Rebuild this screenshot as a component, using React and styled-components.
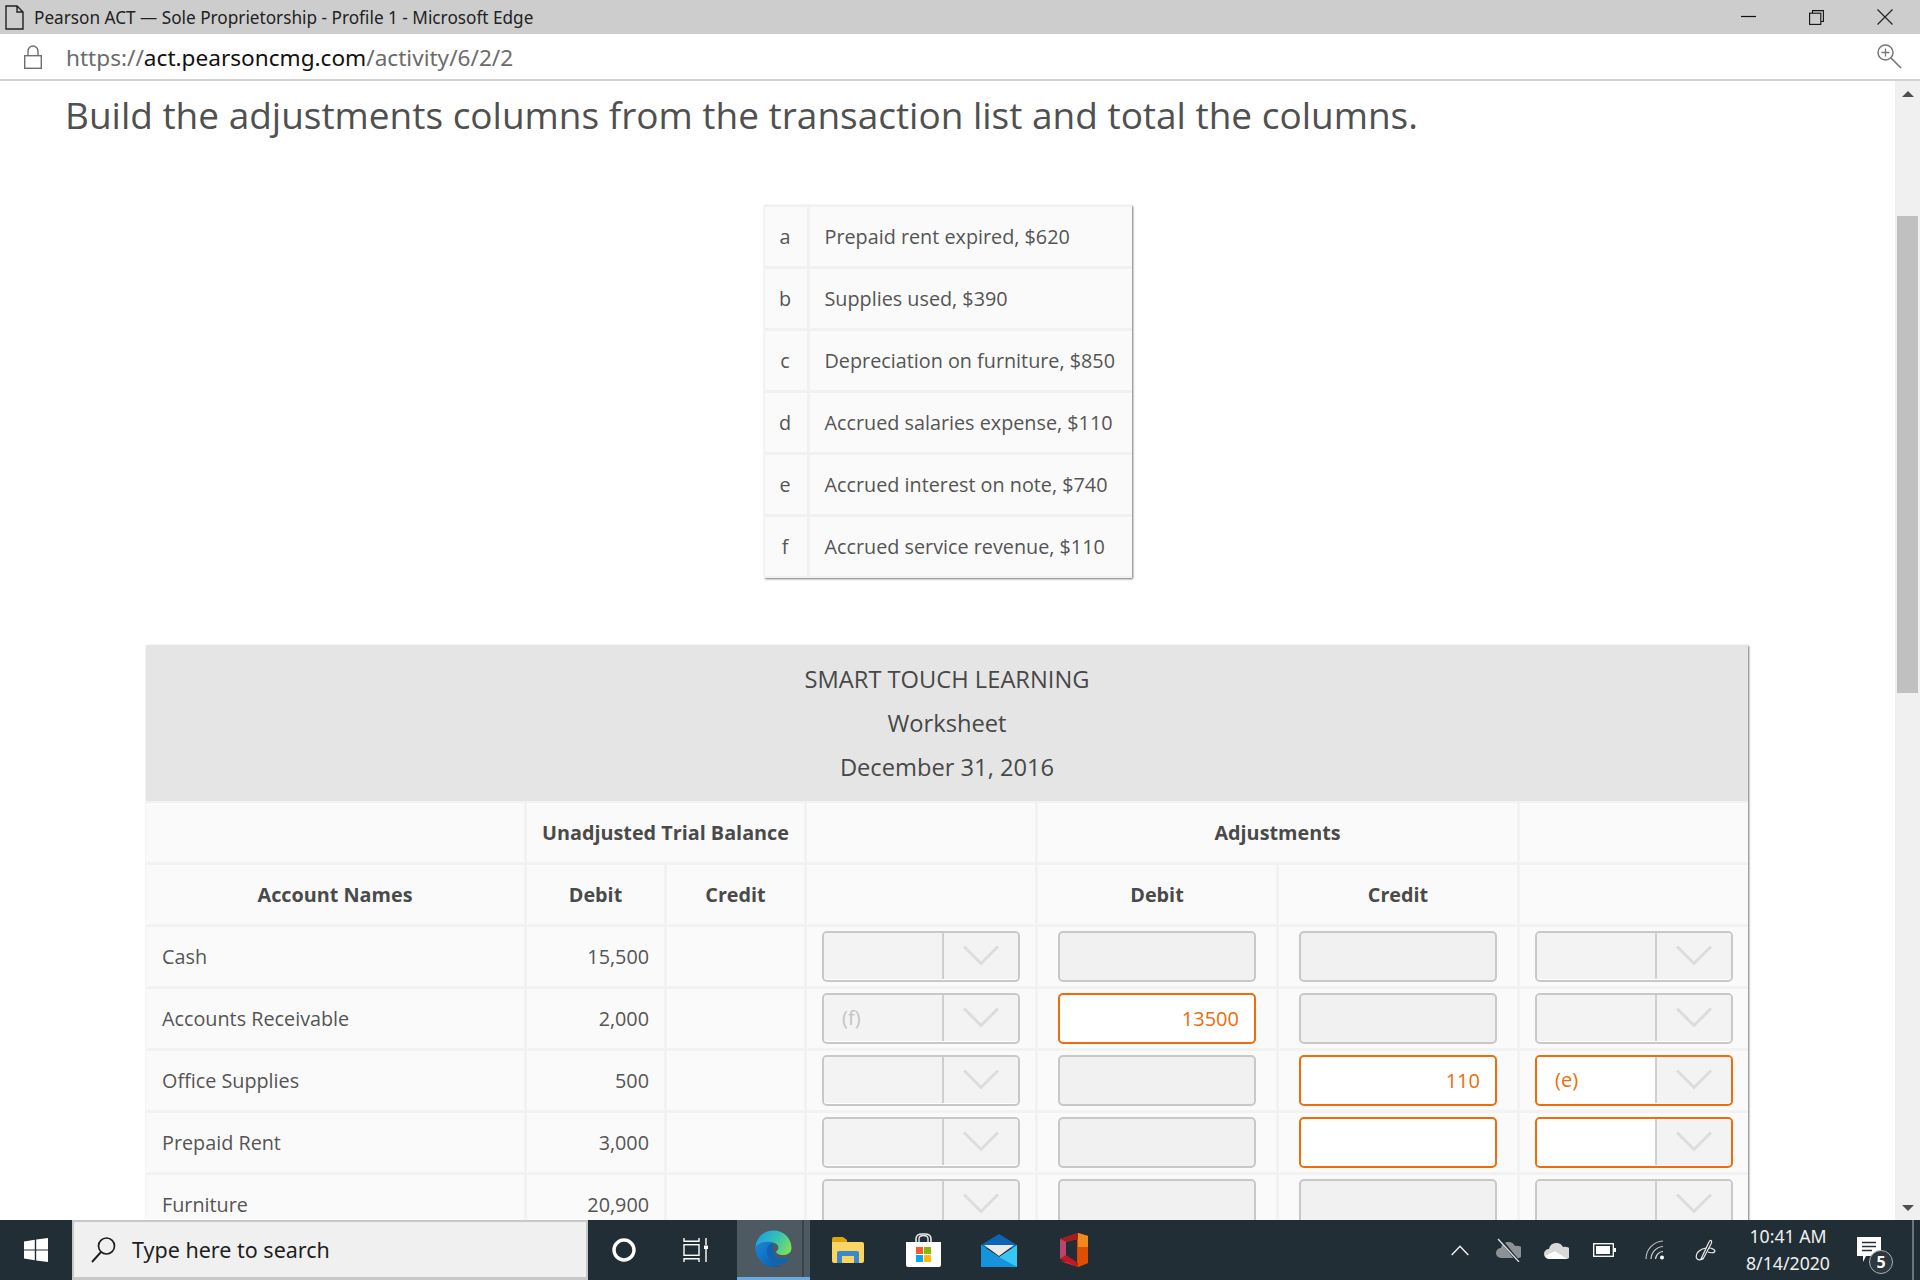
import { Fragment } from "react";
import styled, { createGlobalStyle } from "styled-components";

const GlobalStyle = createGlobalStyle`
  html, body {
    margin: 0;
    padding: 0;
    background: #fff;
  }
  * {
    box-sizing: border-box;
  }
`;

const Screen = styled.div`
  width: 1920px;
  height: 1280px;
  display: flex;
  flex-direction: column;
  overflow: hidden;
  font-family: "Open Sans", "Noto Sans", sans-serif;
`;

const TitleBar = styled.div`
  height: 34px;
  flex: none;
  display: flex;
  align-items: center;
  background: #cdcdcd;
  padding-left: 5px;
`;

const TitleText = styled.span`
  margin-left: 10px;
  font-family: "Noto Sans", sans-serif;
  font-size: 17.2px;
  color: #222;
`;

const WindowControls = styled.div`
  margin-left: auto;
  display: flex;
  align-items: center;
  padding-right: 27px;
  gap: 53px;
`;

const AddressBar = styled.div`
  height: 47px;
  flex: none;
  display: flex;
  align-items: center;
  background: #fff;
  border-bottom: 2px solid #d2d2d2;
  padding: 0 18px 0 24px;
`;

const Url = styled.div`
  margin-left: 24px;
  padding-top: 1px;
  font-family: "Noto Sans", sans-serif;
  font-size: 22.6px;
  color: #6b6b6b;
  strong {
    font-weight: 400;
    color: #111;
  }
`;

const ZoomIcon = styled.div`
  margin-left: auto;
  display: flex;
`;

const Main = styled.div`
  flex: 1;
  min-height: 0;
  display: flex;
  overflow: hidden;
`;

const Content = styled.div`
  flex: 1;
  min-width: 0;
  overflow: hidden;
  background: #fff;
`;

const Heading = styled.h1`
  margin: 12px 0 68px 65px;
  font-size: 36.97px;
  line-height: 44px;
  font-weight: 400;
  color: #505050;
  white-space: nowrap;
`;

const TransactionList = styled.div`
  width: 368px;
  margin-left: 764px;
  padding: 2px 0 2px 1px;
  display: grid;
  grid-template-columns: 42px 322px;
  grid-auto-rows: 59px;
  gap: 3px;
  background: #f1f1f1;
  box-shadow: 1px 1px 2px rgba(0, 0, 0, 0.55);
`;

const TransactionCell = styled.div`
  display: flex;
  align-items: center;
  justify-content: ${(p) => (p.$letter ? "center" : "flex-start")};
  padding: ${(p) => (p.$letter ? "0 2px 0 0" : "0 0 0 14.5px")};
  background: #fafafa;
  font-size: 19.8px;
  color: #555;
`;

const Worksheet = styled.div`
  width: 1602px;
  margin: 67px 0 0 146px;
  background: #f2f2f2;
  box-shadow: 1px 1px 2px rgba(0, 0, 0, 0.55);
`;

const WorksheetHead = styled.div`
  height: 156px;
  margin-bottom: 2px;
  display: flex;
  flex-direction: column;
  align-items: center;
  justify-content: center;
  background: #e5e5e5;
  font-size: 23.7px;
  font-weight: 500;
  line-height: 44px;
  color: #484848;
`;

const WorksheetGrid = styled.div`
  display: grid;
  grid-template-columns: 378px 137px 137px 228px 238px 238px 228px;
  grid-auto-rows: 59px;
  gap: 3px;
`;

const Cell = styled.div`
  grid-column: span ${(p) => p.$span || 1};
  display: flex;
  align-items: center;
  justify-content: ${(p) =>
    p.$align === "right" ? "flex-end" : p.$align === "left" ? "flex-start" : "center"};
  padding: ${(p) => (p.$align ? "0 15px 0 16px" : "0")};
  background: #fafafa;
  font-size: 19.8px;
  white-space: nowrap;
  font-weight: ${(p) => (p.$head ? 700 : 400)};
  color: ${(p) => (p.$head ? "#4a4a4a" : "#555")};
`;

const FieldInput = styled.div`
  width: 198px;
  height: 50.5px;
  display: flex;
  align-items: center;
  justify-content: flex-end;
  padding-right: 15px;
  border: 2px solid ${(p) => (p.$active ? "#ee6c0a" : "#c8c8c8")};
  border-radius: 5px;
  background: ${(p) => (p.$active ? "#fff" : "#f1f1f1")};
  color: #ee6c0a;
  font-size: 20px;
`;

const FieldSelect = styled.div`
  width: 198px;
  height: 51.5px;
  display: flex;
  overflow: hidden;
  border: 2px solid ${(p) => (p.$active ? "#ee6c0a" : "#c8c8c8")};
  border-radius: 5px;
  background: #fff;
`;

const SelectValue = styled.div`
  width: 118px;
  height: 46px;
  display: flex;
  align-items: center;
  padding-left: 18px;
  background: ${(p) => (p.$active ? "#fff" : "#f3f3f3")};
  color: ${(p) => (p.$active ? "#ee6c0a" : "#c4c4c4")};
  font-size: 20px;
`;

const SelectArrow = styled.div`
  flex: 1;
  height: 46px;
  display: flex;
  align-items: flex-start;
  justify-content: center;
  padding-top: 12px;
  background: #f3f3f3;
  border-left: 2px solid #cfcfcf;
`;

const Scrollbar = styled.div`
  width: 25px;
  flex: none;
  display: flex;
  flex-direction: column;
  align-items: center;
  background: #f0f0f0;
`;

const ScrollArrow = styled.div`
  height: 0;
  width: 0;
  border-left: 6px solid transparent;
  border-right: 6px solid transparent;
  ${(p) => (p.$down ? "border-top: 6px solid #505050;" : "border-bottom: 6px solid #505050;")}
  margin-top: ${(p) => (p.$down ? "512px" : "10px")};
`;

const ScrollThumb = styled.div`
  width: 21px;
  height: 477px;
  margin-top: 119px;
  background: #c0c0c0;
`;

const Taskbar = styled.div`
  height: 60px;
  flex: none;
  display: flex;
  align-items: stretch;
  background: #222e36;
  color: #fff;
`;

const Slot = styled.div`
  width: ${(p) => p.$w}px;
  margin-right: ${(p) => p.$after || 0}px;
  flex: none;
  display: flex;
  align-items: center;
  justify-content: center;
  position: relative;
  ${(p) =>
    p.$current &&
    `background: #4d5a62; border-bottom: 3px solid #6aabdf;
     &::after { content: ""; position: absolute; top: 0; bottom: 0; right: 6px; width: 2px; background: #38444c; }`}
`;

const SearchBox = styled.div`
  width: 516px;
  flex: none;
  display: flex;
  align-items: center;
  padding-left: 17px;
  background: #f0f0f0;
  border: 2px solid #c8c8c8;
  border-bottom-width: 3px;
  font-family: "Noto Sans", sans-serif;
  font-size: 21.5px;
  color: #1e1e1e;
`;

const SearchLabel = styled.span`
  margin-left: 15px;
`;

const Tray = styled.div`
  margin-left: auto;
  display: flex;
  align-items: stretch;
  padding-right: 19px;
  border-right: 2px solid #6a767d;
  margin-right: 6px;
`;

const Clock = styled.div`
  width: 116px;
  padding-left: 2px;
  display: flex;
  flex-direction: column;
  align-items: center;
  justify-content: center;
  font-family: "Noto Sans", sans-serif;
  font-size: 17.7px;
  line-height: 27px;
  color: #f0f0f0;
`;

const NotifyBadge = styled.span`
  position: absolute;
  left: 24px;
  top: 30px;
  width: 24px;
  height: 24px;
  border-radius: 50%;
  display: flex;
  align-items: center;
  justify-content: center;
  background: #2d383f;
  border: 1px solid #aab0b4;
  font-size: 16px;
  font-weight: 700;
  color: #fff;
`;

const rows = [
  { name: "Cash", debit: "15,500" },
  {
    name: "Accounts Receivable",
    debit: "2,000",
    left: { value: "(f)" },
    adjDebit: { active: true, value: "13500" },
  },
  {
    name: "Office Supplies",
    debit: "500",
    adjCredit: { active: true, value: "110" },
    right: { active: true, value: "(e)" },
  },
  {
    name: "Prepaid Rent",
    debit: "3,000",
    adjCredit: { active: true },
    right: { active: true },
  },
  { name: "Furniture", debit: "20,900" },
];

const transactions = [
  ["a", "Prepaid rent expired, $620"],
  ["b", "Supplies used, $390"],
  ["c", "Depreciation on furniture, $850"],
  ["d", "Accrued salaries expense, $110"],
  ["e", "Accrued interest on note, $740"],
  ["f", "Accrued service revenue, $110"],
];

const Select = ({ active, value }) => (
  <FieldSelect $active={active}>
    <SelectValue $active={active}>{value}</SelectValue>
    <SelectArrow>
      <svg width="36" height="21" viewBox="0 0 36 21">
        <path d="M1 1.5 L18 18.5 L35 1.5" fill="none" stroke="#dcdcdc" strokeWidth="3" />
      </svg>
    </SelectArrow>
  </FieldSelect>
);

const Input = ({ active, value }) => <FieldInput $active={active}>{value}</FieldInput>;

const Row = ({ row }) => (
  <>
    <Cell $align="left">{row.name}</Cell>
    <Cell $align="right">{row.debit}</Cell>
    <Cell />
    <Cell>
      <Select {...row.left} />
    </Cell>
    <Cell>
      <Input {...row.adjDebit} />
    </Cell>
    <Cell>
      <Input {...row.adjCredit} />
    </Cell>
    <Cell>
      <Select {...row.right} />
    </Cell>
  </>
);

const DocIcon = () => (
  <svg width="19" height="25" viewBox="0 0 19 25">
    <path d="M1 1 H12 L18 7 V24 H1 Z M12 1 V7 H18" fill="none" stroke="#222" strokeWidth="1.4" />
  </svg>
);

const MinimizeIcon = () => (
  <svg width="15" height="15" viewBox="0 0 15 15">
    <path d="M0 6.5 H15" stroke="#111" strokeWidth="1.2" />
  </svg>
);

const RestoreIcon = () => (
  <svg width="15" height="15" viewBox="0 0 15 15">
    <path d="M3.5 3 V0.6 H14.4 V11.5 H12" fill="none" stroke="#111" strokeWidth="1.1" />
    <rect x="0.6" y="3.2" width="11.2" height="11.2" fill="none" stroke="#111" strokeWidth="1.1" />
  </svg>
);

const CloseIcon = () => (
  <svg width="16" height="16" viewBox="0 0 16 16">
    <path d="M0.5 0.5 L15.5 15.5 M15.5 0.5 L0.5 15.5" stroke="#222" strokeWidth="1.2" />
  </svg>
);

const LockIcon = () => (
  <svg width="18" height="24" viewBox="0 0 18 24">
    <rect x="0.7" y="10.7" width="16.6" height="12.6" fill="none" stroke="#6e6e6e" strokeWidth="1.4" />
    <path d="M4 10.5 V6 a5 5 0 0 1 10 0 V10.5" fill="none" stroke="#6e6e6e" strokeWidth="1.4" />
  </svg>
);

const MagnifierIcon = () => (
  <svg width="25" height="25" viewBox="0 0 25 25">
    <circle cx="8.5" cy="8.5" r="7.5" fill="none" stroke="#777" strokeWidth="1.5" />
    <path d="M8.5 4.5 V12.5 M4.5 8.5 H12.5" stroke="#777" strokeWidth="1.3" />
    <path d="M14 14 L24 24" stroke="#777" strokeWidth="1.7" />
  </svg>
);

const WindowsLogo = () => (
  <svg width="24" height="24" viewBox="0 0 24 24">
    <path d="M0 3.4 L10.8 1.8 V11.4 H0 Z M12.2 1.6 L24 0 V11.4 H12.2 Z M0 12.6 H10.8 V22.2 L0 20.6 Z M12.2 12.6 H24 V24 L12.2 22.4 Z" fill="#fff" />
  </svg>
);

const SearchIcon = () => (
  <svg width="26" height="28" viewBox="0 0 26 28">
    <circle cx="15.5" cy="10" r="8" fill="none" stroke="#1e1e1e" strokeWidth="1.7" />
    <path d="M10 16 L1 26" stroke="#1e1e1e" strokeWidth="1.9" />
  </svg>
);

const CortanaIcon = () => (
  <svg width="26" height="26" viewBox="0 0 26 26">
    <circle cx="13" cy="13" r="10" fill="none" stroke="#fff" strokeWidth="3.4" />
  </svg>
);

const TaskViewIcon = () => (
  <svg width="26" height="24" viewBox="0 0 26 24">
    <path d="M1 0 V3.2 H16 V0 M1 24 V20.8 H16 V24" fill="none" stroke="#fff" strokeWidth="1.4" />
    <rect x="1" y="6.7" width="15" height="10.6" fill="none" stroke="#fff" strokeWidth="1.4" />
    <path d="M23 0 V7 M23 11 V24" stroke="#fff" strokeWidth="1.4" />
    <rect x="21" y="7.5" width="4" height="3.5" fill="#fff" />
  </svg>
);

const EdgeIcon = () => (
  <svg width="37" height="37" viewBox="0 0 37 37">
    <defs>
      <linearGradient id="edgeTop" x1="0" y1="0.2" x2="1" y2="0.6">
        <stop offset="0" stopColor="#1b9de2" />
        <stop offset="0.55" stopColor="#35c1b5" />
        <stop offset="1" stopColor="#7ade5e" />
      </linearGradient>
      <linearGradient id="edgeLow" x1="0" y1="0" x2="1" y2="1">
        <stop offset="0" stopColor="#1a86d8" />
        <stop offset="1" stopColor="#0c5aa8" />
      </linearGradient>
    </defs>
    <path d="M0.5 18 C1 7 9 0.5 18.5 0.5 C29 0.5 36.5 8.5 36.5 18 C36.5 22.5 33 25 28 25 C24.5 25 21 23.5 21 21.5 C24.5 20 24 15 20.5 13.5 C13 10.5 3 12 0.5 18 Z" fill="url(#edgeTop)" />
    <path d="M0.5 18 C3 12 13 10.5 18.5 13 C12.5 13.5 10 20 13 26 C15 31 21 35 27 36 C24 36.8 21 37 18.5 37 C8 37 0.5 28 0.5 18 Z" fill="url(#edgeLow)" />
    <path d="M18.5 13 C12.5 13.5 10 20 13 26 C16 32 25 36 29 33.5 C32 32 34 30 35 27.5 C31 29.5 22 30 19 25 C17 21 18 15 18.5 13 Z" fill="#0e64b4" />
  </svg>
);

const FolderIcon = () => (
  <svg width="32" height="27" viewBox="0 0 32 27">
    <path d="M0 2 Q0 0 2 0 H11 L15 3 V8 H0 Z" fill="#e0a50e" />
    <path d="M0 5 H30 Q32 5 32 7 V24 Q32 26 30 26 H2 Q0 26 0 24 Z" fill="#fbd564" />
    <path d="M5 26 V16 Q5 14 7 14 H25 Q27 14 27 16 V26 H22 V19 H10 V26 Z" fill="#3b88cb" />
  </svg>
);

const StoreIcon = () => (
  <svg width="35" height="34" viewBox="0 0 35 34">
    <path d="M10 10 V6 Q10 1 16 1 H19 Q25 1 25 6 V10" fill="none" stroke="#e6e6e6" strokeWidth="1.6" />
    <path d="M13 10 V6 Q13 2.5 17.5 2.5 Q22 2.5 22 6 V10" fill="none" stroke="#e6e6e6" strokeWidth="1.4" />
    <path d="M0 9 H35 V32 Q35 34 33 34 H2 Q0 34 0 32 Z" fill="#fff" />
    <rect x="10" y="14" width="7" height="7" fill="#f25c25" />
    <rect x="18" y="14" width="7" height="7" fill="#83bb06" />
    <rect x="10" y="22" width="7" height="7" fill="#06a6f0" />
    <rect x="18" y="22" width="7" height="7" fill="#ffba06" />
  </svg>
);

const MailIcon = () => (
  <svg width="36" height="33" viewBox="0 0 36 33">
    <path d="M0 11 L18 0 L36 11 V14 H0 Z" fill="#0b64b5" />
    <path d="M3 11 H33 L18 22 Z" fill="#e9e9e9" />
    <path d="M0 11 L18 23 L36 11 V33 H0 Z" fill="#37c6f4" />
    <path d="M0 33 V11 L18 23 L36 33 Z" fill="#1593dc" />
  </svg>
);

const OfficeIcon = () => (
  <svg width="28" height="34" viewBox="0 0 28 34">
    <path d="M0 6 L18 0 L28 3 V30 L18 34 L0 28 L17 30.5 V6 L6 9 V22 L0 26 Z" fill="#dc3e15" />
    <path d="M18 0 L28 3 V30 L18 34 Z" fill="#e04e00" />
    <path d="M18 0 L28 3 V14 L18 14 Z" fill="#f08a1c" />
    <path d="M0 6 L18 0 V6 L6 9 Z" fill="#a51c1c" />
    <path d="M0 6 L6 9 V22 L0 26 Z" fill="#b8476e" />
    <path d="M0 26 L6 22 L18 30 V34 Z" fill="#c4152b" />
  </svg>
);

const ChevronUpIcon = () => (
  <svg width="18" height="11" viewBox="0 0 18 11">
    <path d="M0.7 10 L9 1.2 L17.3 10" fill="none" stroke="#f0f0f0" strokeWidth="1.4" />
  </svg>
);

const CloudPath = "M5 20 a5 5 0 0 1 0 -10 a7.5 7.5 0 0 1 14 -2 a6 6 0 0 1 4 12 Z";

const CloudOffIcon = () => (
  <svg width="25" height="24" viewBox="0 0 25 24">
    <path d={CloudPath} fill="#8d9296" />
    <path d="M3 0 L22 23" stroke="#222e36" strokeWidth="3.2" />
    <path d="M2 1 L23 24" stroke="#e8e8e8" strokeWidth="1.2" />
  </svg>
);

const CloudIcon = () => (
  <svg width="25" height="20" viewBox="0 2 25 18">
    <path d={CloudPath} fill="#d8d8d8" />
    <path d="M1 17 L11 12 L23 20 H5 a5 5 0 0 1 -4 -3 Z" fill="#fff" />
  </svg>
);

const BatteryIcon = () => (
  <svg width="23" height="14" viewBox="0 0 23 14">
    <rect x="0.7" y="0.7" width="19.6" height="12.6" fill="none" stroke="#fff" strokeWidth="1.3" />
    <rect x="3" y="3" width="14" height="8" fill="#fff" />
    <rect x="21" y="5" width="2" height="4" fill="#fff" />
  </svg>
);

const WifiIcon = () => (
  <svg width="20" height="20" viewBox="0 0 20 20">
    <path d="M1 19 A18 18 0 0 1 18 1" fill="none" stroke="#bcbcbc" strokeWidth="1.2" />
    <path d="M6 19 A13 13 0 0 1 18 6.5" fill="none" stroke="#d0d0d0" strokeWidth="1.2" />
    <path d="M10.5 19 A8 8 0 0 1 18 11.5" fill="none" stroke="#e8e8e8" strokeWidth="1.2" />
    <circle cx="17" cy="17.5" r="2" fill="#fff" />
  </svg>
);

const PenIcon = () => (
  <svg width="21" height="22" viewBox="0 0 21 22">
    <path d="M6 20 L14 3 Q15 0.5 16.5 2 Q17 3 16 5 L8 20 Z" fill="none" stroke="#eee" strokeWidth="1.2" />
    <path d="M11 9 C5 10 0 14 1.5 19 C3 22 7 21 8 19 M14 9 C17 9 21 11 19.5 13 C18.5 14 15 14 13 13" fill="none" stroke="#eee" strokeWidth="1.2" />
  </svg>
);

const NotifyIcon = () => (
  <svg width="25" height="26" viewBox="0 0 25 26">
    <path d="M0 0 H24 V19 H9 L6 25 V19 H0 Z" fill="#fff" />
    <path d="M5 5.5 H19 M5 9.5 H19 M5 13.5 H15" stroke="#26323a" strokeWidth="1.3" />
  </svg>
);

const App = () => (
  <Screen>
    <GlobalStyle />
    <TitleBar>
      <DocIcon />
      <TitleText>Pearson ACT — Sole Proprietorship - Profile 1 - Microsoft Edge</TitleText>
      <WindowControls>
        <MinimizeIcon />
        <RestoreIcon />
        <CloseIcon />
      </WindowControls>
    </TitleBar>
    <AddressBar>
      <LockIcon />
      <Url>
        https://<strong>act.pearsoncmg.com</strong>/activity/6/2/2
      </Url>
      <ZoomIcon>
        <MagnifierIcon />
      </ZoomIcon>
    </AddressBar>
    <Main>
      <Content>
        <Heading>Build the adjustments columns from the transaction list and total the columns.</Heading>
        <TransactionList>
          {transactions.map(([letter, text]) => (
            <Fragment key={letter}>
              <TransactionCell $letter>{letter}</TransactionCell>
              <TransactionCell>{text}</TransactionCell>
            </Fragment>
          ))}
        </TransactionList>
        <Worksheet>
          <WorksheetHead>
            <div>SMART TOUCH LEARNING</div>
            <div>Worksheet</div>
            <div>December 31, 2016</div>
          </WorksheetHead>
          <WorksheetGrid>
            <Cell />
            <Cell $span={2} $head>
              Unadjusted Trial Balance
            </Cell>
            <Cell />
            <Cell $span={2} $head>
              Adjustments
            </Cell>
            <Cell />
            <Cell $head>Account Names</Cell>
            <Cell $head>Debit</Cell>
            <Cell $head>Credit</Cell>
            <Cell />
            <Cell $head>Debit</Cell>
            <Cell $head>Credit</Cell>
            <Cell />
            {rows.map((row) => (
              <Row key={row.name} row={row} />
            ))}
          </WorksheetGrid>
        </Worksheet>
      </Content>
      <Scrollbar>
        <ScrollArrow />
        <ScrollThumb />
        <ScrollArrow $down />
      </Scrollbar>
    </Main>
    <Taskbar>
      <Slot $w={72}>
        <WindowsLogo />
      </Slot>
      <SearchBox>
        <SearchIcon />
        <SearchLabel>Type here to search</SearchLabel>
      </SearchBox>
      <Slot $w={72}>
        <CortanaIcon />
      </Slot>
      <Slot $w={72} $after={5}>
        <TaskViewIcon />
      </Slot>
      <Slot $w={73} $current>
        <EdgeIcon />
      </Slot>
      <Slot $w={76}>
        <FolderIcon />
      </Slot>
      <Slot $w={75}>
        <StoreIcon />
      </Slot>
      <Slot $w={75}>
        <MailIcon />
      </Slot>
      <Slot $w={75}>
        <OfficeIcon />
      </Slot>
      <Tray>
        <Slot $w={48}>
          <ChevronUpIcon />
        </Slot>
        <Slot $w={48}>
          <CloudOffIcon />
        </Slot>
        <Slot $w={48}>
          <CloudIcon />
        </Slot>
        <Slot $w={48}>
          <BatteryIcon />
        </Slot>
        <Slot $w={54}>
          <WifiIcon />
        </Slot>
        <Slot $w={47}>
          <PenIcon />
        </Slot>
        <Clock>
          <div>10:41 AM</div>
          <div>8/14/2020</div>
        </Clock>
        <Slot $w={48}>
          <NotifyIcon />
          <NotifyBadge>5</NotifyBadge>
        </Slot>
      </Tray>
    </Taskbar>
  </Screen>
);

export default App;
